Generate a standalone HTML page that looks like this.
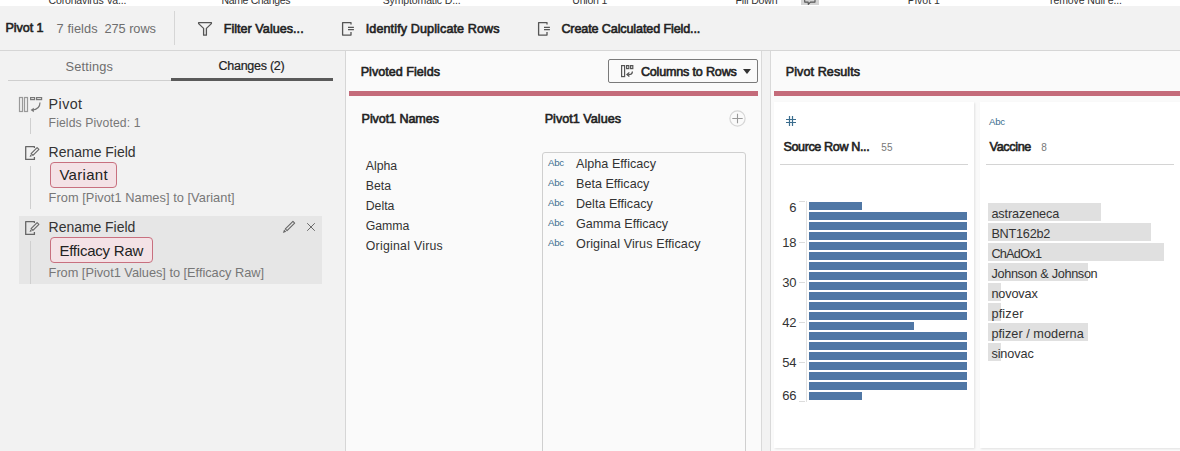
<!DOCTYPE html>
<html><head><meta charset="utf-8"><title>Pivot 1</title>
<style>
html,body{margin:0;padding:0;}
body{width:1180px;height:451px;overflow:hidden;position:relative;font-family:"Liberation Sans",sans-serif;background:#f2f2f2;}
body>div,body>span,body>svg{position:absolute;}
span{white-space:nowrap;}
</style></head><body>
<div style="left:0px;top:0px;width:1180px;height:451px;background:#f2f2f2"></div>
<div style="left:0px;top:0px;width:1180px;height:6px;background:#ffffff"></div>
<span style="left:48.5px;top:-4.92px;font-size:10.5px;line-height:10.5px;color:#333;letter-spacing:-0.146px;">Coronavirus Va...</span>
<span style="left:221.5px;top:-4.92px;font-size:10.5px;line-height:10.5px;color:#333;letter-spacing:-0.360px;">Name Changes</span>
<span style="left:382.7px;top:-4.92px;font-size:10.5px;line-height:10.5px;color:#333;letter-spacing:-0.129px;">Symptomatic D...</span>
<span style="left:572.3px;top:-4.92px;font-size:10.5px;line-height:10.5px;color:#333;letter-spacing:-0.199px;">Union 1</span>
<span style="left:735.6px;top:-4.92px;font-size:10.5px;line-height:10.5px;color:#333;letter-spacing:-0.147px;">Fill Down</span>
<span style="left:907.8px;top:-4.92px;font-size:10.5px;line-height:10.5px;color:#333;letter-spacing:-0.017px;">Pivot 1</span>
<span style="left:1050px;top:-4.92px;font-size:10.5px;line-height:10.5px;color:#333;letter-spacing:-0.102px;">remove Null e...</span>
<div style="left:801px;top:0px;width:18px;height:5px;background:#d4d4d4"></div>
<svg style="left:801px;top:0px;" width="18" height="5" viewBox="0 0 18 5"><path d="M3.7 -2 V2.1 H7.2 L7.3 4.4 L9.4 2.1 H14 V-2" fill="none" stroke="#555" stroke-width="1.1" stroke-linejoin="round"/></svg>
<div style="left:0px;top:6px;width:1180px;height:44px;background:#f2f2f2"></div>
<div style="left:0px;top:50px;width:1180px;height:1px;background:#d6d6d6"></div>
<div style="left:174px;top:11px;width:1px;height:34px;background:#d6d6d6"></div>
<span style="left:5.5px;top:22.29px;font-size:12.6px;line-height:12.6px;color:#222;letter-spacing:-0.087px;-webkit-text-stroke:0.6px #222;">Pivot 1</span>
<span style="left:56.6px;top:22.62px;font-size:12.8px;line-height:12.8px;color:#6e6e6e;letter-spacing:0.063px;">7 fields</span>
<span style="left:104.5px;top:22.62px;font-size:12.8px;line-height:12.8px;color:#6e6e6e;letter-spacing:-0.062px;">275 rows</span>
<svg style="left:197px;top:21px;" width="16" height="16" viewBox="0 0 16 16"><path d="M1.6 1.6 H14.4 V2.6 L9.4 7.4 V14.2 H6.6 V7.4 L1.6 2.6 Z" fill="none" stroke="#555" stroke-width="1.3" stroke-linejoin="round"/></svg>
<span style="left:223.7px;top:22.99px;font-size:12.6px;line-height:12.6px;color:#222;letter-spacing:0.027px;-webkit-text-stroke:0.6px #222;">Filter Values...</span>
<svg style="left:341px;top:21px;" width="14" height="16" viewBox="0 0 14 16"><path d="M10 3.6 V1.6 H1.6 V14.1 H10 V10.9" fill="none" stroke="#555" stroke-width="1.3" stroke-linejoin="round"/><path d="M7 6.4 H12.9 M7 8.6 H12.9" stroke="#555" stroke-width="1.1"/></svg>
<span style="left:365.7px;top:22.99px;font-size:12.6px;line-height:12.6px;color:#222;letter-spacing:0.106px;-webkit-text-stroke:0.6px #222;">Identify Duplicate Rows</span>
<svg style="left:537px;top:21px;" width="14" height="16" viewBox="0 0 14 16"><path d="M10 3.6 V1.6 H1.6 V14.1 H10 V10.9" fill="none" stroke="#555" stroke-width="1.3" stroke-linejoin="round"/><path d="M7 6.4 H12.9 M7 8.6 H12.9" stroke="#555" stroke-width="1.1"/></svg>
<span style="left:561.4px;top:22.99px;font-size:12.6px;line-height:12.6px;color:#222;letter-spacing:-0.127px;-webkit-text-stroke:0.6px #222;">Create Calculated Field...</span>
<div style="left:345px;top:51px;width:1px;height:400px;background:#d6d6d6"></div>
<span style="left:65.6px;top:60.82px;font-size:12.8px;line-height:12.8px;color:#6e6e6e;letter-spacing:0.150px;">Settings</span>
<span style="left:218.5px;top:59.88px;font-size:12.5px;line-height:12.5px;color:#222;letter-spacing:-0.258px;-webkit-text-stroke:0.2px #222;">Changes (2)</span>
<div style="left:8px;top:80px;width:163px;height:1px;background:#cfcfcf"></div>
<div style="left:171px;top:78px;width:162px;height:3px;background:#5a5a5a"></div>
<svg style="left:18px;top:96px;" width="26" height="17" viewBox="0 0 26 17"><rect x="1.5" y="1.5" width="3" height="14" fill="none" stroke="#999" stroke-width="1.2"/><rect x="6.5" y="1.5" width="3" height="14" fill="none" stroke="#999" stroke-width="1.2"/><rect x="12.6" y="1.6" width="4" height="2" fill="none" stroke="#777" stroke-width="1.2"/><rect x="18.6" y="1.6" width="5" height="2" fill="none" stroke="#777" stroke-width="1.2"/><path d="M22 6.5 Q22 13.5 14 14" fill="none" stroke="#777" stroke-width="1.2"/><path d="M12.6 14 L15.8 11.8 L15.8 16.2 Z" fill="#777"/></svg>
<span style="left:48.6px;top:96.84px;font-size:14.3px;line-height:14.3px;color:#333;letter-spacing:0.427px;">Pivot</span>
<span style="left:48.6px;top:116.63px;font-size:12.2px;line-height:12.2px;color:#777;letter-spacing:0.113px;">Fields Pivoted: 1</span>
<div style="left:30px;top:118px;width:1px;height:16px;background:#cfcfcf"></div>
<svg style="left:24px;top:145px;" width="16" height="16" viewBox="0 0 16 16"><path d="M10.4 3.1 V1.6 H1.7 V14.4 H10.4 V12" fill="none" stroke="#666" stroke-width="1.3" stroke-linejoin="round"/><path d="M7.1 8.6 L13.1 2.6 L14.9 4.4 L8.9 10.4 Z" fill="none" stroke="#666" stroke-width="1.1" stroke-linejoin="round"/><path d="M5.6 11.9 L6.4 9.4 L8.1 11.1 Z" fill="#666"/></svg>
<span style="left:48.6px;top:145.10px;font-size:14px;line-height:14px;color:#333;letter-spacing:-0.014px;">Rename Field</span>
<div style="left:50px;top:162px;width:67px;height:26px;background:#f4e2e6;border:1px solid #c8707f;border-radius:4px;box-sizing:border-box"></div>
<span style="left:59.4px;top:167.25px;font-size:15px;line-height:15px;color:#222;letter-spacing:0.298px;">Variant</span>
<span style="left:48.6px;top:192.12px;font-size:12.8px;line-height:12.8px;color:#777;letter-spacing:0.042px;">From [Pivot1 Names] to [Variant]</span>
<div style="left:30px;top:166px;width:1px;height:43px;background:#cfcfcf"></div>
<div style="left:19px;top:216px;width:303px;height:68px;background:#e6e6e6"></div>
<svg style="left:24px;top:220px;" width="16" height="16" viewBox="0 0 16 16"><path d="M10.4 3.1 V1.6 H1.7 V14.4 H10.4 V12" fill="none" stroke="#666" stroke-width="1.3" stroke-linejoin="round"/><path d="M7.1 8.6 L13.1 2.6 L14.9 4.4 L8.9 10.4 Z" fill="none" stroke="#666" stroke-width="1.1" stroke-linejoin="round"/><path d="M5.6 11.9 L6.4 9.4 L8.1 11.1 Z" fill="#666"/></svg>
<span style="left:48.6px;top:219.90px;font-size:14px;line-height:14px;color:#333;letter-spacing:-0.041px;">Rename Field</span>
<div style="left:50px;top:237px;width:103px;height:26px;background:#f4e2e6;border:1px solid #c8707f;border-radius:4px;box-sizing:border-box"></div>
<span style="left:59.4px;top:242.75px;font-size:15px;line-height:15px;color:#222;letter-spacing:-0.220px;">Efficacy Raw</span>
<span style="left:48.6px;top:266.82px;font-size:12.8px;line-height:12.8px;color:#777;letter-spacing:-0.027px;">From [Pivot1 Values] to [Efficacy Raw]</span>
<div style="left:30px;top:241px;width:1px;height:43px;background:#cfcfcf"></div>
<svg style="left:281px;top:220px;" width="16" height="14" viewBox="0 0 16 14"><path d="M4.35 8.95 L11.95 1.35 L13.65 3.05 L6.05 10.65 Z" fill="none" stroke="#666" stroke-width="1.1" stroke-linejoin="round"/><path d="M1.9 12.9 L3.1 9.6 L5.2 11.7 Z" fill="#666"/></svg>
<svg style="left:305px;top:221px;" width="12" height="12" viewBox="0 0 12 12"><path d="M2.2 2.2 L9.8 9.8 M9.8 2.2 L2.2 9.8" stroke="#6a6a6a" stroke-width="1"/></svg>
<div style="left:346px;top:51px;width:415px;height:400px;background:#fafafa"></div>
<div style="left:761px;top:51px;width:1px;height:400px;background:#d9d9d9"></div>
<span style="left:360.7px;top:66.29px;font-size:12.6px;line-height:12.6px;color:#222;letter-spacing:0.012px;-webkit-text-stroke:0.6px #222;">Pivoted Fields</span>
<div style="left:608px;top:59px;width:150px;height:24px;background:#fafafa;border:1px solid #7a7a7a;border-radius:2px;box-sizing:border-box"></div>
<svg style="left:619px;top:63px;" width="16" height="16" viewBox="0 0 16 16"><rect x="2.6" y="2.6" width="3" height="11" fill="none" stroke="#555" stroke-width="1.2"/><rect x="7.6" y="2.6" width="2.2" height="3" fill="none" stroke="#555" stroke-width="1.2"/><rect x="11.6" y="2.6" width="2.2" height="3" fill="none" stroke="#555" stroke-width="1.2"/><path d="M13.4 8.4 Q13.4 11.6 9.2 11.6" fill="none" stroke="#555" stroke-width="1.3"/><path d="M10.4 9.6 L8 11.6 L10.4 13.6" fill="none" stroke="#555" stroke-width="1.3"/></svg>
<span style="left:640.9px;top:66.29px;font-size:12.6px;line-height:12.6px;color:#222;letter-spacing:-0.195px;-webkit-text-stroke:0.6px #222;">Columns to Rows</span>
<svg style="left:742px;top:68px;" width="10" height="7" viewBox="0 0 10 7"><path d="M1 1 H9 L5 6 Z" fill="#333"/></svg>
<div style="left:349px;top:91px;width:409px;height:5px;background:#c46b7a"></div>
<span style="left:361.6px;top:112.79px;font-size:12.6px;line-height:12.6px;color:#222;letter-spacing:-0.094px;-webkit-text-stroke:0.6px #222;">Pivot1 Names</span>
<span style="left:544.7px;top:112.79px;font-size:12.6px;line-height:12.6px;color:#222;letter-spacing:0.024px;-webkit-text-stroke:0.6px #222;">Pivot1 Values</span>
<svg style="left:728px;top:109px;" width="19" height="19" viewBox="0 0 19 19"><circle cx="9.5" cy="9.5" r="7.6" fill="none" stroke="#d6d6d6" stroke-width="1.2"/><path d="M4.3 9.5 H14.7 M9.5 4.7 V14.2" stroke="#999" stroke-width="1.1"/></svg>
<span style="left:365.7px;top:159.74px;font-size:12.3px;line-height:12.3px;color:#333;letter-spacing:0.010px;">Alpha</span>
<span style="left:365.7px;top:179.74px;font-size:12.3px;line-height:12.3px;color:#333;">Beta</span>
<span style="left:365.7px;top:199.74px;font-size:12.3px;line-height:12.3px;color:#333;">Delta</span>
<span style="left:365.7px;top:219.74px;font-size:12.3px;line-height:12.3px;color:#333;">Gamma</span>
<span style="left:365.7px;top:239.74px;font-size:12.3px;line-height:12.3px;color:#333;letter-spacing:0.269px;">Original Virus</span>
<div style="left:542px;top:152px;width:204px;height:320px;background:#fafafa;border:1px solid #cfcfcf;border-radius:3px;box-sizing:border-box"></div>
<span style="left:548px;top:158.44px;font-size:9.6px;line-height:9.6px;color:#3b6d8e;letter-spacing:-0.271px;">Abc</span>
<span style="left:576px;top:158.09px;font-size:12.6px;line-height:12.6px;color:#333;letter-spacing:0.030px;">Alpha Efficacy</span>
<span style="left:548px;top:178.44px;font-size:9.6px;line-height:9.6px;color:#3b6d8e;letter-spacing:-0.271px;">Abc</span>
<span style="left:576px;top:178.09px;font-size:12.6px;line-height:12.6px;color:#333;">Beta Efficacy</span>
<span style="left:548px;top:198.44px;font-size:9.6px;line-height:9.6px;color:#3b6d8e;letter-spacing:-0.271px;">Abc</span>
<span style="left:576px;top:198.09px;font-size:12.6px;line-height:12.6px;color:#333;">Delta Efficacy</span>
<span style="left:548px;top:218.44px;font-size:9.6px;line-height:9.6px;color:#3b6d8e;letter-spacing:-0.271px;">Abc</span>
<span style="left:576px;top:218.09px;font-size:12.6px;line-height:12.6px;color:#333;">Gamma Efficacy</span>
<span style="left:548px;top:238.44px;font-size:9.6px;line-height:9.6px;color:#3b6d8e;letter-spacing:-0.271px;">Abc</span>
<span style="left:576px;top:238.09px;font-size:12.6px;line-height:12.6px;color:#333;letter-spacing:0.087px;">Original Virus Efficacy</span>
<div style="left:770px;top:51px;width:410px;height:400px;background:#fafafa"></div>
<div style="left:770px;top:51px;width:1px;height:400px;background:#d9d9d9"></div>
<span style="left:785.8px;top:66.29px;font-size:12.6px;line-height:12.6px;color:#222;letter-spacing:0.064px;-webkit-text-stroke:0.6px #222;">Pivot Results</span>
<div style="left:774px;top:91px;width:406px;height:5px;background:#c46b7a"></div>
<div style="left:774px;top:102px;width:200px;height:346px;background:#fff;box-shadow:1px 1px 2px rgba(0,0,0,0.10)"></div>
<div style="left:980px;top:102px;width:210px;height:346px;background:#fff;box-shadow:1px 1px 2px rgba(0,0,0,0.10)"></div>
<svg style="left:784px;top:115px;" width="14" height="12" viewBox="0 0 14 12"><path d="M5.5 1 V11 M8.5 1 V11 M2 4.5 H12 M2 7.5 H12" stroke="#3b6d8e" stroke-width="1.2"/></svg>
<span style="left:783.4px;top:141.29px;font-size:12.6px;line-height:12.6px;color:#222;letter-spacing:-0.388px;-webkit-text-stroke:0.6px #222;">Source Row N...</span>
<span style="left:881.3px;top:142.50px;font-size:10px;line-height:10px;color:#777;letter-spacing:0.077px;">55</span>
<div style="left:780px;top:164px;width:188px;height:1px;background:#d4d4d4"></div>
<div style="left:806px;top:201px;width:1px;height:201px;background:#e2e2e2"></div>
<div style="left:799px;top:201px;width:6px;height:1px;background:#dcdcdc"></div>
<div style="left:799px;top:242px;width:6px;height:1px;background:#dcdcdc"></div>
<div style="left:799px;top:282px;width:6px;height:1px;background:#dcdcdc"></div>
<div style="left:799px;top:322px;width:6px;height:1px;background:#dcdcdc"></div>
<div style="left:799px;top:362px;width:6px;height:1px;background:#dcdcdc"></div>
<div style="left:799px;top:401px;width:6px;height:1px;background:#dcdcdc"></div>
<span style="left:700px;width:96.6px;text-align:right;top:200.75px;font-size:13px;line-height:13px;color:#333">6</span>
<span style="left:700px;width:96.6px;text-align:right;top:235.55px;font-size:13px;line-height:13px;color:#333">18</span>
<span style="left:700px;width:96.6px;text-align:right;top:275.75px;font-size:13px;line-height:13px;color:#333">30</span>
<span style="left:700px;width:96.6px;text-align:right;top:315.65px;font-size:13px;line-height:13px;color:#333">42</span>
<span style="left:700px;width:96.6px;text-align:right;top:355.65px;font-size:13px;line-height:13px;color:#333">54</span>
<span style="left:700px;width:96.6px;text-align:right;top:388.95px;font-size:13px;line-height:13px;color:#333">66</span>
<div style="left:809px;top:202px;width:53px;height:7.6px;background:#5077a5"></div>
<div style="left:809px;top:212px;width:158px;height:7.6px;background:#5077a5"></div>
<div style="left:809px;top:222px;width:158px;height:7.6px;background:#5077a5"></div>
<div style="left:809px;top:232px;width:158px;height:7.6px;background:#5077a5"></div>
<div style="left:809px;top:242px;width:158px;height:7.6px;background:#5077a5"></div>
<div style="left:809px;top:252px;width:158px;height:7.6px;background:#5077a5"></div>
<div style="left:809px;top:262px;width:158px;height:7.6px;background:#5077a5"></div>
<div style="left:809px;top:272px;width:158px;height:7.6px;background:#5077a5"></div>
<div style="left:809px;top:282px;width:158px;height:7.6px;background:#5077a5"></div>
<div style="left:809px;top:292px;width:158px;height:7.6px;background:#5077a5"></div>
<div style="left:809px;top:302px;width:158px;height:7.6px;background:#5077a5"></div>
<div style="left:809px;top:312px;width:158px;height:7.6px;background:#5077a5"></div>
<div style="left:809px;top:322px;width:105px;height:7.6px;background:#5077a5"></div>
<div style="left:809px;top:332px;width:158px;height:7.6px;background:#5077a5"></div>
<div style="left:809px;top:342px;width:158px;height:7.6px;background:#5077a5"></div>
<div style="left:809px;top:352px;width:158px;height:7.6px;background:#5077a5"></div>
<div style="left:809px;top:362px;width:158px;height:7.6px;background:#5077a5"></div>
<div style="left:809px;top:372px;width:158px;height:7.6px;background:#5077a5"></div>
<div style="left:809px;top:382px;width:158px;height:7.6px;background:#5077a5"></div>
<div style="left:809px;top:392px;width:53px;height:7.6px;background:#5077a5"></div>
<span style="left:989px;top:116.84px;font-size:9.6px;line-height:9.6px;color:#3b6d8e;letter-spacing:-0.271px;">Abc</span>
<span style="left:989.6px;top:141.09px;font-size:12.6px;line-height:12.6px;color:#222;letter-spacing:-0.349px;-webkit-text-stroke:0.6px #222;">Vaccine</span>
<span style="left:1041.2px;top:142.50px;font-size:10px;line-height:10px;color:#777;">8</span>
<div style="left:986px;top:164px;width:188px;height:1px;background:#d4d4d4"></div>
<div style="left:988px;top:203px;width:113px;height:18px;background:#e0e0e0"></div>
<div style="left:988px;top:223px;width:163px;height:18px;background:#e0e0e0"></div>
<div style="left:988px;top:243px;width:176px;height:18px;background:#e0e0e0"></div>
<div style="left:988px;top:263px;width:100px;height:18px;background:#e0e0e0"></div>
<div style="left:988px;top:283px;width:13px;height:18px;background:#e0e0e0"></div>
<div style="left:988px;top:303px;width:13px;height:18px;background:#e0e0e0"></div>
<div style="left:988px;top:323px;width:100px;height:18px;background:#e0e0e0"></div>
<div style="left:988px;top:343px;width:13px;height:18px;background:#e0e0e0"></div>
<span style="left:991.4px;top:208.21px;font-size:12.7px;line-height:12.7px;color:#333;letter-spacing:-0.119px;">astrazeneca</span>
<span style="left:991.4px;top:228.21px;font-size:12.7px;line-height:12.7px;color:#333;letter-spacing:-0.245px;">BNT162b2</span>
<span style="left:991.4px;top:248.21px;font-size:12.7px;line-height:12.7px;color:#333;letter-spacing:-0.743px;">ChAdOx1</span>
<span style="left:991.4px;top:268.20px;font-size:12.7px;line-height:12.7px;color:#333;letter-spacing:-0.323px;">Johnson &amp; Johnson</span>
<span style="left:991.4px;top:288.20px;font-size:12.7px;line-height:12.7px;color:#333;letter-spacing:-0.134px;">novovax</span>
<span style="left:991.4px;top:308.20px;font-size:12.7px;line-height:12.7px;color:#333;letter-spacing:0.189px;">pfizer</span>
<span style="left:991.4px;top:328.20px;font-size:12.7px;line-height:12.7px;color:#333;letter-spacing:0.042px;">pfizer / moderna</span>
<span style="left:991.4px;top:348.20px;font-size:12.7px;line-height:12.7px;color:#333;letter-spacing:-0.094px;">sinovac</span>
</body></html>
